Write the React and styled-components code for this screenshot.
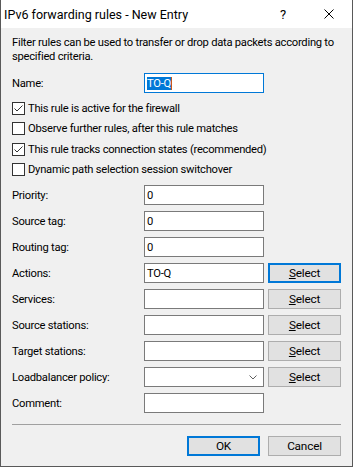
import React from "react";
import styled, { createGlobalStyle, css } from "styled-components";

const GlobalStyle = createGlobalStyle`
  html, body { margin: 0; padding: 0; background: #f0f0f0; }
  body { font-family: Roboto, "Liberation Sans", Arial, sans-serif; }
  * { box-sizing: border-box; }
`;

const Window = styled.div`
  width: 353px;
  height: 467px;
  display: flex;
  flex-direction: column;
  border: 1px solid #595959;
  border-top: none;
  background: #f0f0f0;
  color: #000;
`;

const TitleBar = styled.div`
  height: 28px;
  flex: none;
  background: #fff;
  display: flex;
  align-items: center;
  padding-left: 3px;
`;

const Title = styled.div`
  flex: 1;
  font-size: 12.5px;
  color: #000;
`;

const TitleButton = styled.div`
  width: 46px;
  height: 28px;
  display: flex;
  align-items: center;
  justify-content: center;
  font-size: 13px;
  color: #000;
`;

const Body = styled.div`
  flex: 1;
  display: flex;
  flex-direction: column;
  padding: 8px 11px 10px;
  font-size: 11.2px;
  letter-spacing: -0.25px;
`;

const Description = styled.p`
  margin: 0;
  line-height: 14px;
`;

const FieldRow = styled.div`
  display: grid;
  grid-template-columns: 128px 120px 73px;
  column-gap: 4px;
  align-items: center;
  height: 20px;
`;

const NameRow = styled(FieldRow)`
  margin-top: 9px;
`;

const Label = styled.span`
  white-space: nowrap;
`;

const CheckList = styled.div`
  margin-top: 5px;
  display: flex;
  flex-direction: column;
`;

const CheckRow = styled.div`
  height: 20.5px;
  display: flex;
  align-items: center;
  gap: 3px;
`;

const Box = styled.span`
  width: 13px;
  height: 13px;
  flex: none;
  border: 1px solid #333;
  background: #fff;
  display: flex;
  align-items: center;
  justify-content: center;
`;

const FieldList = styled.div`
  margin-top: 5px;
  display: flex;
  flex-direction: column;
  gap: 6px;
`;

const TextBox = styled.div`
  height: 20px;
  background: #fff;
  border: 1px solid ${(p) => (p.$focused ? "#0078d7" : "#7a7a7a")};
  display: flex;
  align-items: center;
  padding-left: 2px;
  white-space: nowrap;
  overflow: hidden;
`;

const Selection = styled.span`
  background: #0078d7;
  color: #fff;
  border-right: 1px solid #c8581a;
`;

const ComboBox = styled(TextBox)`
  justify-content: flex-end;
  padding-right: 6px;
`;

const buttonBase = css`
  height: 20px;
  display: flex;
  align-items: center;
  justify-content: center;
  background: #e1e1e1;
  border: ${(p) => (p.$focused ? "2px solid #0078d7" : "1px solid #adadad")};
  font-size: 11.8px;
  letter-spacing: -0.2px;
  color: #000;
`;

const PushButton = styled.div`
  ${buttonBase}
  width: 73px;
`;

const Accel = styled.span`
  text-decoration: underline;
  text-underline-offset: 1px;
`;

const Separator = styled.div`
  margin-top: 11px;
  height: 1px;
  background: #a0a0a0;
`;

const Footer = styled.div`
  margin-top: 11px;
  display: flex;
  justify-content: flex-end;
  gap: 8px;
`;

const CheckMark = () => (
  <svg width="11" height="11" viewBox="0 0 11 11">
    <polyline points="1.5,5.5 4,8 9.5,2.5" fill="none" stroke="#333" strokeWidth="1" />
  </svg>
);

const CloseIcon = () => (
  <svg width="10" height="10" viewBox="0 0 10 10">
    <path d="M0.5 0.5 L9.5 9.5 M9.5 0.5 L0.5 9.5" stroke="#000" strokeWidth="1" />
  </svg>
);

const Chevron = () => (
  <svg width="8" height="5" viewBox="0 0 8 5">
    <polyline points="0.5,0.5 4,4 7.5,0.5" fill="none" stroke="#606060" strokeWidth="1" />
  </svg>
);

const SelectBtn = ({ focused }) => (
  <PushButton $focused={focused}>
    <span>
      <Accel>S</Accel>elect
    </span>
  </PushButton>
);

const checks = [
  { label: "This rule is active for the firewall", checked: true },
  { label: "Observe further rules, after this rule matches", checked: false },
  { label: "This rule tracks connection states (recommended)", checked: true },
  { label: "Dynamic path selection session switchover", checked: false },
];

const fields = [
  { label: "Priority:", value: "0" },
  { label: "Source tag:", value: "0" },
  { label: "Routing tag:", value: "0" },
  { label: "Actions:", value: "TO-Q", select: true, focused: true },
  { label: "Services:", value: "", select: true },
  { label: "Source stations:", value: "", select: true },
  { label: "Target stations:", value: "", select: true },
  { label: "Loadbalancer policy:", value: "", select: true, combo: true },
  { label: "Comment:", value: "" },
];

export default function App() {
  return (
    <>
      <GlobalStyle />
      <Window>
        <TitleBar>
          <Title>IPv6 forwarding rules - New Entry</Title>
          <TitleButton>?</TitleButton>
          <TitleButton>
            <CloseIcon />
          </TitleButton>
        </TitleBar>
        <Body>
          <Description>
            Filter rules can be used to transfer or drop data packets according to specified criteria.
          </Description>
          <NameRow>
            <Label>Name:</Label>
            <TextBox $focused>
              <Selection>TO-Q</Selection>
            </TextBox>
          </NameRow>
          <CheckList>
            {checks.map((c) => (
              <CheckRow key={c.label}>
                <Box>{c.checked && <CheckMark />}</Box>
                <Label>{c.label}</Label>
              </CheckRow>
            ))}
          </CheckList>
          <FieldList>
            {fields.map((f) => (
              <FieldRow key={f.label}>
                <Label>{f.label}</Label>
                {f.combo ? (
                  <ComboBox>
                    <Chevron />
                  </ComboBox>
                ) : (
                  <TextBox>{f.value}</TextBox>
                )}
                {f.select && <SelectBtn focused={f.focused} />}
              </FieldRow>
            ))}
          </FieldList>
          <Separator />
          <Footer>
            <PushButton $focused>OK</PushButton>
            <PushButton>Cancel</PushButton>
          </Footer>
        </Body>
      </Window>
    </>
  );
}
